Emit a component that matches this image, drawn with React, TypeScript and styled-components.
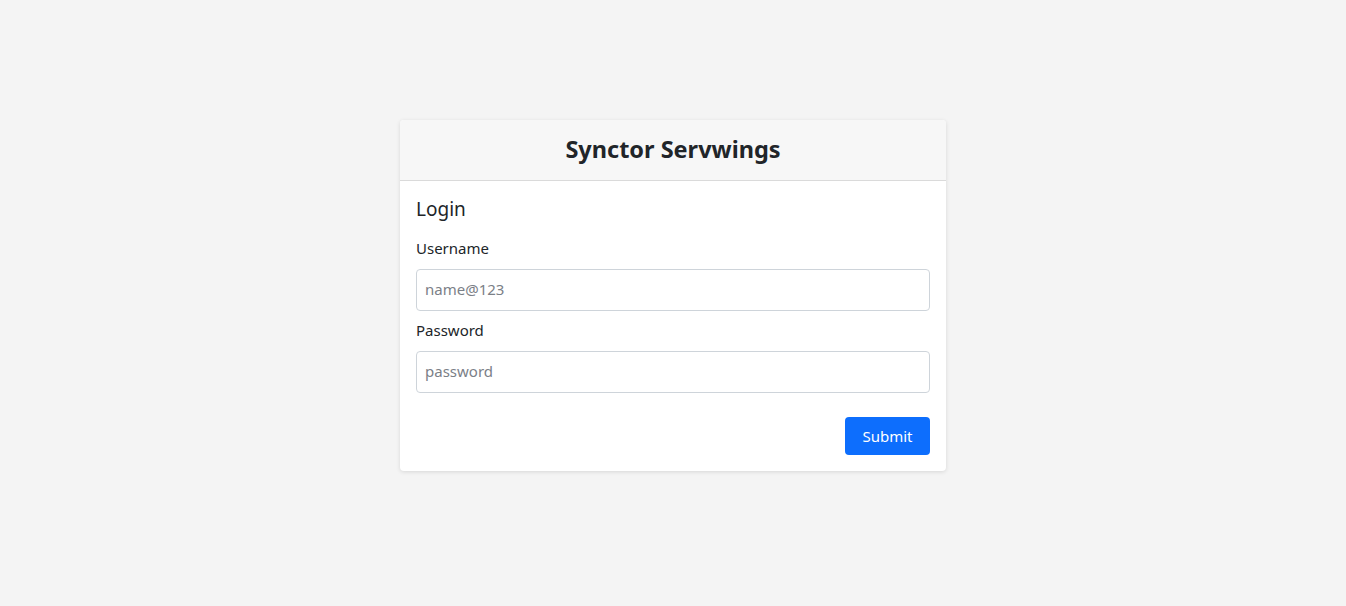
import React from "react";
import styled, { createGlobalStyle } from "styled-components";

const Global = createGlobalStyle`
  html, body { margin: 0; padding: 0; background: #f4f4f4; }
  body { font-family: "Noto Sans", "Open Sans", sans-serif; color: #212529; }
  * { box-sizing: border-box; }
`;

const Page = styled.div`
  min-height: 606px;
  display: flex;
  justify-content: center;
  align-items: flex-start;
  padding-top: 120px;
`;

const Card = styled.div`
  width: 546px;
  background: #fff;
  border-radius: 4px;
  box-shadow: 0 1px 4px rgba(0, 0, 0, 0.12);
  overflow: hidden;
`;

const Header = styled.div`
  height: 61px;
  padding-bottom: 1px;
  background: #f7f7f7;
  border-bottom: 1px solid #dadada;
  display: flex;
  align-items: center;
  justify-content: center;
`;

const Brand = styled.h4`
  margin: 0;
  font-size: 23.5px;
  font-weight: 700;
  line-height: 1;
  color: #212529;
`;

const Body = styled.form`
  padding: 16px;
  display: flex;
  flex-direction: column;
`;

const Title = styled.h5`
  margin: 0 0 15px;
  font-size: 19px;
  font-weight: 400;
  line-height: 24px;
`;

const Label = styled.label<{ $gap?: number }>`
  display: block;
  font-size: 15px;
  line-height: 24px;
  margin-top: ${(p) => p.$gap ?? 0}px;
  margin-bottom: 9px;
`;

const Input = styled.input`
  width: 100%;
  height: 42px;
  padding: 0 8px 2px;
  font-family: inherit;
  font-size: 15px;
  color: #212529;
  border: 1px solid #ced4da;
  border-radius: 4px;
  outline: none;
  &::placeholder { color: #7b8087; }
`;

const Actions = styled.div`
  display: flex;
  justify-content: flex-end;
  margin-top: 24px;
`;

const Button = styled.button`
  width: 85px;
  height: 38px;
  background: #0d6efd;
  color: #fff;
  border: none;
  border-radius: 4px;
  font-family: inherit;
  font-size: 15px;
  cursor: pointer;
`;

export default function App() {
  return (
    <>
      <Global />
      <Page>
        <Card>
          <Header>
            <Brand>Synctor Servwings</Brand>
          </Header>
          <Body onSubmit={(e) => e.preventDefault()}>
            <Title>Login</Title>
            <Label htmlFor="username">Username</Label>
            <Input id="username" placeholder="name@123" />
            <Label htmlFor="password" $gap={7}>Password</Label>
            <Input id="password" type="password" placeholder="password" />
            <Actions>
              <Button type="submit">Submit</Button>
            </Actions>
          </Body>
        </Card>
      </Page>
    </>
  );
}
